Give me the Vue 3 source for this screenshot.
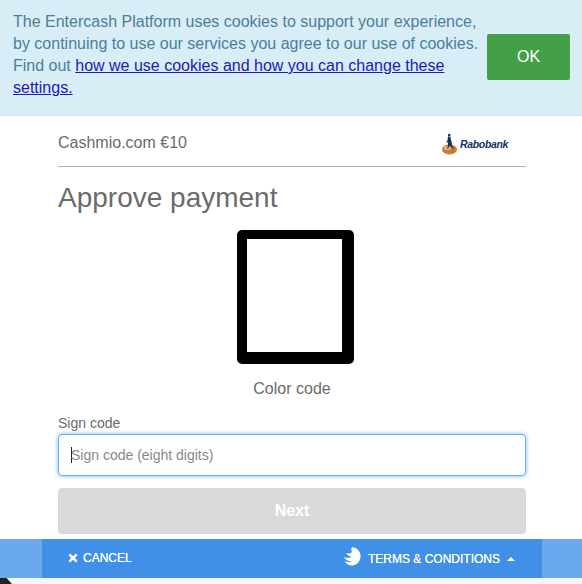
<script setup>
const settingsText = 'how we use cookies and how you can change these settings.'
</script>

<template>
  <div class="page">
    <div class="banner">
      <p class="banner-text">
        The Entercash Platform uses cookies to support your experience, by continuing to use our services you agree to our use of cookies. Find out
        <a href="#" class="banner-link">{{ settingsText }}</a>
      </p>
      <button class="ok">OK</button>
    </div>

    <main class="content">
      <div class="merchant">
        <span>Cashmio.com €10</span>
        <div class="bank">
          <svg width="17" height="22" viewBox="0 0 17 22" class="bank-mark">
            <ellipse cx="8.500" cy="16.500" rx="7.500" ry="5" fill="#c97a33" />
            <ellipse cx="6.500" cy="15" rx="3.600" ry="2.200" fill="#eab27a" />
            <circle cx="8.200" cy="2" r="1.300" fill="#1c2f5c" />
            <path d="M7 3.400h2.400l.5 3 .9 3.600.3 3.200 1.600 2.300h-1.500l-1.800-2.600-1 .2-1.300 2.400H6.100l1-3.400-.4-3-.9.6-.3-1.200 1-1.100z" fill="#1c2f5c" />
          </svg>
          <span class="bank-name">Rabobank</span>
        </div>
      </div>

      <h1 class="title">Approve payment</h1>

      <div class="code-frame"></div>
      <div class="code-label">Color code</div>

      <label class="field-label" for="sign">Sign code</label>
      <div class="input">
        <span class="caret"></span>
        <span class="placeholder">Sign code (eight digits)</span>
      </div>

      <button class="next">Next</button>
    </main>

    <footer class="footer">
      <div class="footer-inner">
        <div class="cancel">
          <svg width="10" height="10" viewBox="0 0 10 10">
            <path d="M2.200.4 5 3.200 7.800.4l1.800 1.800L6.800 5l2.800 2.800-1.800 1.800L5 6.800 2.200 9.600.4 7.800 3.200 5 .4 2.200z" fill="#fff" />
          </svg>
          <span>CANCEL</span>
        </div>
        <div class="terms">
          <svg width="18" height="19" viewBox="0 0 18 19" class="terms-mark">
            <path d="M9 .3c4.900 0 8.600 4 8.600 9s-3.800 9.200-8.600 9.200c-3.300 0-6.100-1.800-7.500-4.500 2.700 1.500 5.500 1.500 7.500.1C6 14.500 2.500 13.300.6 10c2.900 1.200 6.100 1.200 8-.3C6.800 9.500 4.300 8.400 2.900 6c2.300.7 4.900.5 6.300-.9C8.200 3.900 7.800 2.100 9 .3z" fill="#fff" />
          </svg>
          <span>TERMS &amp; CONDITIONS</span>
          <span class="caret-up"></span>
        </div>
      </div>
    </footer>
    <div class="bottom">
      <span class="corner"></span>
    </div>
  </div>
</template>

<style>
html, body { margin: 0; overflow: hidden; background: #fff; }
</style>

<style scoped>
.page {
  width: 582px;
  height: 584px;
  overflow: hidden;
  font-family: "Liberation Sans", Arial, sans-serif;
  color: #6b6b6b;
  display: flex;
  flex-direction: column;
}
.banner {
  box-sizing: border-box;
  height: 116px;
  flex: none;
  padding: 11px 12px 0 13px;
  background: #d9edf7;
  border-bottom: 1px solid #cfe6ef;
  display: flex;
  gap: 8px;
}
.banner-text {
  margin: 0;
  width: 466px;
  flex: none;
  font-size: 16px;
  line-height: 22px;
  color: #4a7f9b;
}
.banner-link { color: #1a1ab8; text-decoration: underline; }
.ok {
  width: 83px;
  height: 46px;
  margin-top: 23px;
  border: 0;
  border-radius: 2px;
  background: #43a047;
  color: #fff;
  font: 16px "Liberation Sans", Arial, sans-serif;
  padding: 0;
}
.content {
  flex: none;
  box-sizing: border-box;
  width: 468px;
  height: 423px;
  margin-left: 58px;
}
.merchant {
  height: 51px;
  box-sizing: border-box;
  padding-top: 17px;
  border-bottom: 1px solid #b3b3b3;
  display: flex;
  justify-content: space-between;
  font-size: 16px;
  line-height: 20px;
}
.bank {
  display: flex;
  align-items: flex-start;
  gap: 2px;
  margin-right: 18px;
}
.bank-name {
  font-size: 10.5px;
  line-height: 14px;
  margin-top: 4px;
  font-weight: bold;
  font-style: italic;
  color: #13306b;
  letter-spacing: -0.35px;
}
.title {
  margin: 15px 0 0;
  font-size: 28px;
  line-height: 32px;
  font-weight: 400;
  color: #6b6b6b;
}
.code-frame {
  box-sizing: border-box;
  width: 117px;
  height: 134px;
  margin: 16px 0 0 179px;
  border-style: solid;
  border-color: #000;
  border-width: 9px 12px 12px 10px;
  border-radius: 5px;
  background: #fff;
}
.code-label {
  margin-top: 15px;
  text-align: center;
  font-size: 16px;
  line-height: 20px;
}
.field-label {
  display: block;
  margin-top: 16px;
  font-size: 14px;
  line-height: 17px;
}
.input {
  box-sizing: border-box;
  height: 42px;
  margin-top: 2px;
  padding-left: 12px;
  border: 1px solid #66afe9;
  border-radius: 4px;
  box-shadow: 0 0 4px rgba(102, 175, 233, 0.9);
  display: flex;
  align-items: center;
  font-size: 14px;
}
.caret { width: 1px; height: 16px; background: #222; flex: none; }
.placeholder { color: #888; margin-left: -1px; }
.next {
  display: block;
  width: 100%;
  height: 46px;
  margin-top: 12px;
  border: 0;
  border-radius: 4px;
  background: #d9d9d9;
  color: #fff;
  font: bold 16px "Liberation Sans", Arial, sans-serif;
  padding: 0;
}
.footer {
  flex: none;
  height: 39px;
  background: #6aa9ec;
}
.footer-inner {
  box-sizing: border-box;
  width: 500px;
  height: 39px;
  margin-left: 42px;
  padding: 0 27px 0 26px;
  background: #3f90e6;
  display: flex;
  justify-content: space-between;
  color: #fff;
  font-size: 12px;
  text-shadow: 0 0 0.6px #fff;
}
.cancel { display: flex; align-items: center; gap: 5px; height: 37px; }
.terms { display: flex; align-items: center; height: 39px; gap: 7px; }
.terms-mark { margin-top: -5px; }
.caret-up {
  width: 0;
  height: 0;
  border-left: 4px solid transparent;
  border-right: 4px solid transparent;
  border-bottom: 4px solid #fff;
}
.bottom {
  flex: 1;
  background: #f4f6f9;
}
.corner {
  display: block;
  width: 12px;
  height: 6px;
  background: #1f2428;
  clip-path: polygon(0 0, 55% 0, 100% 100%, 0 100%);
}
</style>
